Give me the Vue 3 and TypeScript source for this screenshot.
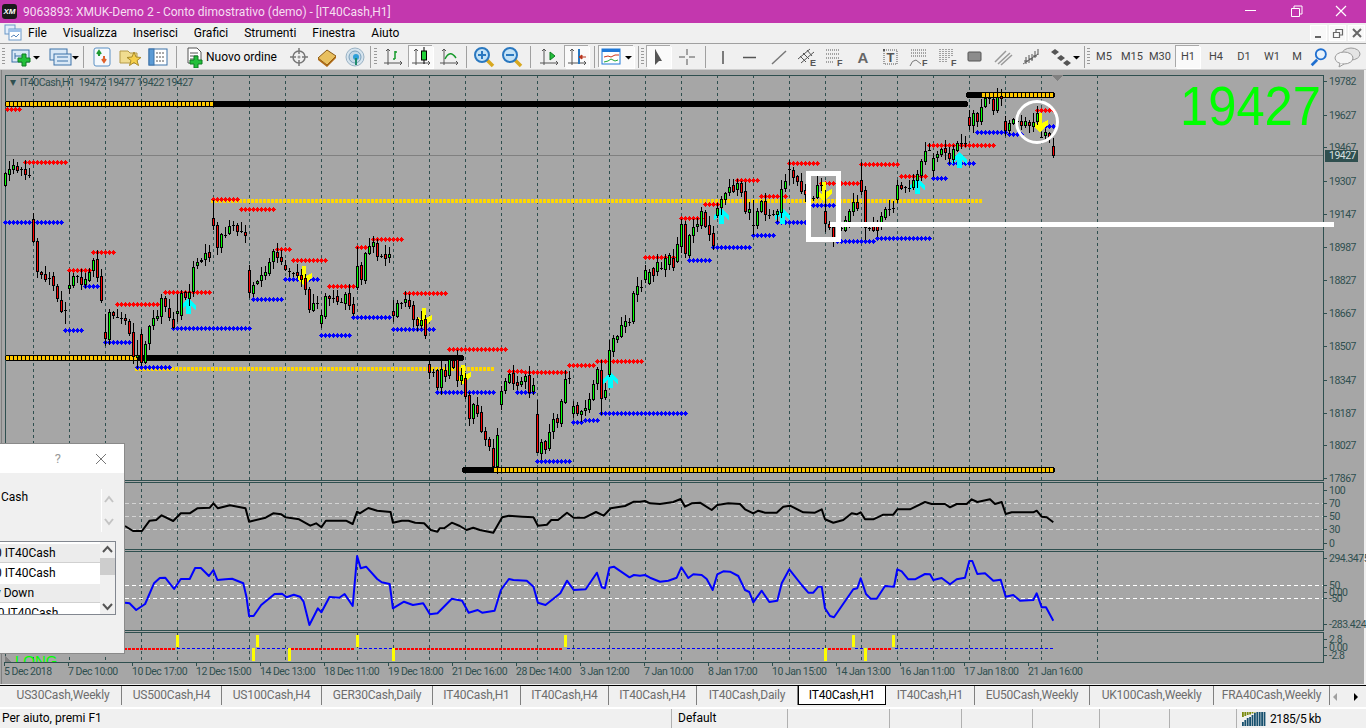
<script setup lang="ts">
type Level = [number, number, number]
type Bar = [number, number, number]

interface Tool {
  w: number
  kind: 'grip' | 'sep' | 'sepgrip' | 'icon' | 'tf' | 'order'
  svg?: string
  svgW?: number
  label?: string
  on?: boolean
}

const axes = '<path d="M7 3v16M3 17h18M5 5l2-2 2 2M19 15l2 2-2 2" stroke="#555" fill="none"/>'
const caret = (x: number) => `<path d="M${x} 10h7l-3.5 3.5z" fill="#000"/>`
const plusGreen = (x: number, y: number) =>
  `<path d="M${x} ${y}h4v4h4v4h-4v4h-4v-4h-4v-4h4z" fill="#22c03a" stroke="#0f7a22"/>`

const tools: Tool[] = [
  { w: 7, kind: 'grip' },
  { w: 40, kind: 'icon', svgW: 36, svg: `<rect x="3" y="4" width="17" height="12" fill="#d9e8f6" stroke="#3d72a8"/><path d="M6 7v6M6 10h10" stroke="#3d72a8"/>${plusGreen(13, 8)}${caret(24)}` },
  { w: 32, kind: 'icon', svgW: 32, svg: `<rect x="3" y="3" width="17" height="11" fill="#d9e8f6" stroke="#3d72a8"/><rect x="7" y="8" width="17" height="11" fill="#d9e8f6" stroke="#3d72a8"/><path d="M10 11h11M10 15h11" stroke="#3d72a8"/>${caret(25)}` },
  { w: 9, kind: 'sep' },
  { w: 28, kind: 'icon', svg: '<rect x="4" y="2" width="16" height="18" rx="2" fill="#f4f8fc" stroke="#5a90c4"/><path d="M9 6v4M7 8l2-3 2 3" stroke="#1f9a32" fill="none" stroke-width="2"/><path d="M14 10v5M12 13l2 3 2-3" stroke="#e0602a" fill="none" stroke-width="2"/>' },
  { w: 28, kind: 'icon', svg: '<path d="M2 5h8l2 2h7v10H2z" fill="#f0dc90" stroke="#b49a48"/><path d="M16 6l2 5 5 .5-4 3 1.500 5-4.500-3-4.500 3 1.500-5-4-3 5-.5z" fill="#f6cf4a" stroke="#a88a2a"/>' },
  { w: 28, kind: 'icon', svg: '<rect x="3" y="3" width="18" height="16" fill="#fff" stroke="#3d72a8"/><rect x="3" y="3" width="5" height="16" fill="#5b9bd5" stroke="#3d72a8"/><path d="M10 7h9M10 11h9M10 15h9" stroke="#555" stroke-dasharray="2 1"/>' },
  { w: 9, kind: 'sep' },
  { w: 104, kind: 'order', label: 'Nuovo ordine', svg: `<path d="M5 2h9l4 4v11H5z" fill="#fff" stroke="#555"/><path d="M7 7h8M7 10h8M7 13h6" stroke="#555"/>${plusGreen(11, 10)}` },
  { w: 28, kind: 'icon', svg: '<circle cx="12" cy="11" r="6" fill="none" stroke="#777" stroke-width="1.500"/><circle cx="12" cy="11" r="1.500" fill="#999"/><path d="M12 2v6M12 14v6M3 11h6M15 11h6" stroke="#777" stroke-width="1.500"/>' },
  { w: 28, kind: 'icon', svg: '<path d="M3 12l9-8 9 6-9 9z" fill="#e8c060" stroke="#8a5a14"/><path d="M3 12l9 7 9-9v2l-9 9-9-7z" fill="#b06a14"/>' },
  { w: 28, kind: 'icon', svg: '<circle cx="12" cy="11" r="9" fill="#d6e4ee" stroke="#9ab2c4"/><circle cx="12" cy="11" r="6" fill="#c4d8e6" stroke="#7aa0bc"/><circle cx="13" cy="11" r="3" fill="#2f9fd8"/><path d="M13 12v7" stroke="#1f8a6a" stroke-width="2"/>' },
  { w: 3, kind: 'sep' },
  { w: 7, kind: 'grip' },
  { w: 28, kind: 'icon', svg: `${axes}<path d="M14 5v8M12 13h2M14 6h2" stroke="#159a2a" stroke-width="1.500" fill="none"/>` },
  { w: 28, on: true, kind: 'icon', svg: `${axes}<path d="M15 1v17" stroke="#000"/><rect x="12.500" y="5" width="5" height="9" fill="#22d23a" stroke="#000"/>` },
  { w: 28, kind: 'icon', svg: `${axes}<path d="M8 13q5-10 11-1" stroke="#159a2a" stroke-width="1.500" fill="none"/>` },
  { w: 7, kind: 'sep' },
  { w: 28, kind: 'icon', svg: '<path d="M15 14l6 6" stroke="#d8a820" stroke-width="3.500"/><circle cx="10" cy="9" r="7" fill="#c4e2f6" stroke="#2a78c0" stroke-width="2"/><path d="M6 9h8M10 5v8" stroke="#2a78c0" stroke-width="2"/>' },
  { w: 28, kind: 'icon', svg: '<path d="M15 14l6 6" stroke="#d8a820" stroke-width="3.500"/><circle cx="10" cy="9" r="7" fill="#c4e2f6" stroke="#2a78c0" stroke-width="2"/><path d="M6 9h8" stroke="#2a78c0" stroke-width="2"/>' },
  { w: 9, kind: 'sep' },
  { w: 28, kind: 'icon', svg: `${axes}<path d="M13 6v8l5-4z" fill="#22c03a" stroke="#0f7a22"/>` },
  { w: 28, on: true, kind: 'icon', svg: `${axes}<path d="M14 3v15" stroke="#2a78c0" stroke-width="2"/><path d="M21 11h-4M17 9l-3 2 3 2z" stroke="#b8341c" fill="#b8341c"/>` },
  { w: 6, kind: 'sep' },
  { w: 39, on: true, kind: 'icon', svgW: 35, svg: `<rect x="3" y="3" width="18" height="15" fill="#fff" stroke="#1f78d8"/><rect x="3" y="3" width="18" height="3" fill="#1f78d8"/><path d="M5 11l4-1 3 1 4-2 4 0" stroke="#c8341c" fill="none"/><path d="M5 16l4-1 3-2 4 2 3-1" stroke="#22a83a" fill="none"/>${caret(26)}` },
  { w: 9, kind: 'sepgrip' },
  { w: 28, on: true, kind: 'icon', svg: '<path d="M8 3v16l4-4 3 0z M8 3l11 11h-5z M9 4v14l4-4h6z" fill="#555"/>' },
  { w: 28, kind: 'icon', svg: '<path d="M12 3v6M12 13v6M4 11h6M14 11h6" stroke="#555"/>' },
  { w: 8, kind: 'sep' },
  { w: 28, kind: 'icon', svg: '<path d="M12 5v13" stroke="#555" stroke-width="1.500"/>' },
  { w: 28, kind: 'icon', svg: '<path d="M4 11.500h13" stroke="#555" stroke-width="1.500"/>' },
  { w: 28, kind: 'icon', svg: '<path d="M5 18L19 5" stroke="#777" stroke-width="1.500"/>' },
  { w: 28, kind: 'icon', svg: '<path d="M3 13L15 3M6 17L19 6M5 10l6 6M8 7l6 6M12 4l5 6" stroke="#555"/><text x="15" y="20" font-size="9" font-weight="700" font-family="Liberation Sans" fill="#555">E</text>' },
  { w: 28, kind: 'icon', svg: '<path d="M3 4h14M3 8h14M3 12h14M3 16h8" stroke="#555" stroke-dasharray="1 1"/><text x="14" y="20" font-size="9" font-weight="700" font-family="Liberation Sans" fill="#555">F</text>' },
  { w: 28, kind: 'icon', svg: '<text x="12" y="17" text-anchor="middle" font-size="15" font-weight="700" font-family="Liberation Sans" fill="#666">A</text>' },
  { w: 28, kind: 'icon', svg: '<rect x="5" y="4" width="13" height="14" fill="none" stroke="#555" stroke-dasharray="1 1"/><rect x="4" y="3" width="2" height="2" fill="#555"/><text x="11.500" y="16" text-anchor="middle" font-size="13" font-weight="700" font-family="Liberation Sans" fill="#555">T</text>' },
  { w: 28, kind: 'icon', svg: '<path d="M4 4h15M4 7h15M4 10h15" stroke="#555" stroke-dasharray="1 1"/><path d="M3 20q2-6 6-6l5 4" stroke="#777" fill="none"/><text x="15" y="20" font-size="9" font-weight="700" font-family="Liberation Sans" fill="#555">F</text>' },
  { w: 28, kind: 'icon', svg: '<path d="M5 3v14M8 3v14M11 3v14M14 3v10M17 3v8" stroke="#555" stroke-dasharray="1 1"/><text x="16" y="20" font-size="9" font-weight="700" font-family="Liberation Sans" fill="#555">F</text>' },
  { w: 28, kind: 'icon', svg: '<rect x="5" y="6" width="13" height="9" rx="1" fill="#8c8c8c" stroke="#555"/>' },
  { w: 28, kind: 'icon', svg: '<path d="M4 16L15 5M7 18L19 7M10 19L21 9" stroke="#999" stroke-width="1.500"/>' },
  { w: 28, kind: 'icon', svg: '<path d="M4 18l15-10" stroke="#666"/><path d="M7 11v7M10 9v8M13 8v7M16 5v7M19 3v6M5 15h4M10 13h4M14 10h4" stroke="#555"/>' },
  { w: 38, kind: 'icon', svgW: 36, svg: `<path d="M9 3l4 3-4 3-4-3zM15 9l4 3-4 3-4-3zM21 14l-4 3 4 3 4-3z" fill="#555"/>${caret(27)}` },
  { w: 7, kind: 'sepgrip' },
  { w: 28, kind: 'tf', label: 'M5' },
  { w: 28, kind: 'tf', label: 'M15' },
  { w: 28, kind: 'tf', label: 'M30' },
  { w: 28, kind: 'tf', label: 'H1', on: true },
  { w: 28, kind: 'tf', label: 'H4' },
  { w: 28, kind: 'tf', label: 'D1' },
  { w: 28, kind: 'tf', label: 'W1' },
  { w: 22, kind: 'tf', label: 'M' },
  { w: 22, kind: 'icon', svg: '<path d="M10 14l-6 6" stroke="#1f6fd0" stroke-width="3"/><circle cx="14" cy="8" r="5.500" fill="#e8f2fb" stroke="#1f6fd0" stroke-width="2"/>' },
  { w: 36, kind: 'icon', svgW: 32, svg: '<ellipse cx="19" cy="8" rx="9" ry="6" fill="#e4e4e4" stroke="#9a9a9a"/><ellipse cx="12" cy="12" rx="9" ry="6" fill="#f4f4f4" stroke="#9a9a9a"/><path d="M8 17l-1 4 5-3" fill="#f4f4f4" stroke="#9a9a9a"/>' },
]

const menus = ['File', 'Visualizza', 'Inserisci', 'Grafici', 'Strumenti', 'Finestra', 'Aiuto']

const tabs = [
  { label: 'US30Cash,Weekly', w: 117 },
  { label: 'US500Cash,H4', w: 100 },
  { label: 'US100Cash,H4', w: 100 },
  { label: 'GER30Cash,Daily', w: 111 },
  { label: 'IT40Cash,H1', w: 88 },
  { label: 'IT40Cash,H4', w: 88 },
  { label: 'IT40Cash,H4', w: 88 },
  { label: 'IT40Cash,Daily', w: 101 },
  { label: 'IT40Cash,H1', w: 88, on: true },
  { label: 'IT40Cash,H1', w: 89 },
  { label: 'EU50Cash,Weekly', w: 115 },
  { label: 'UK100Cash,Weekly', w: 124 },
  { label: 'FRA40Cash,Weekly', w: 116 },
]

const statusCells = [
  { w: 672, text: 'Per aiuto, premi F1' },
  { w: 116, text: 'Default' },
  { w: 102, text: '' },
  { w: 72, text: '' },
  { w: 71, text: '' },
  { w: 67, text: '' },
  { w: 70, text: '' },
  { w: 67, text: '' },
]

const netBars = [4, 6, 8, 9, 11, 13, 14, 16, 15, 16]

// one entry per H1 bar: body top y, body bottom y, 1 = rising
const bars: Bar[] = [
  [173,186,1],[169,175,1],[165,170,1],[166,171,0],[169,169,1],[169,175,0],[175,175,0],[219,242,0],[241,272,0],[272,275,0],
  [274,280,0],[278,278,0],[276,286,0],[286,299,0],[300,312,0],[310,310,0],[285,289,1],[276,286,1],[276,276,0],[277,285,0],
  [279,285,1],[272,281,1],[260,271,1],[259,278,0],[276,301,0],[332,339,0],[312,340,1],[312,316,0],[317,317,0],[318,318,0],
  [318,321,0],[321,334,0],[332,357,0],[355,358,1],[334,363,0],[344,363,1],[326,344,1],[318,326,1],[316,319,1],[298,317,1],
  [298,307,0],[308,318,0],[319,328,0],[311,314,1],[293,316,1],[292,298,0],[292,299,1],[267,292,1],[262,266,1],[260,262,1],
  [253,260,1],[252,258,0],[218,226,0],[225,248,0],[234,248,1],[235,235,0],[226,234,1],[225,225,0],[225,232,0],[231,231,0],
  [232,236,0],[270,293,0],[285,294,1],[281,284,1],[275,281,1],[272,276,1],[262,274,1],[251,262,1],[252,258,0],[257,262,0],
  [265,270,0],[271,271,0],[273,273,0],[272,276,0],[275,280,0],[278,290,0],[289,310,0],[303,311,1],[303,303,0],[315,324,1],
  [296,317,1],[296,299,0],[298,298,0],[296,302,0],[302,302,0],[294,304,1],[293,306,0],[304,314,0],[266,288,1],[265,280,0],
  [253,281,1],[246,254,1],[242,247,1],[243,257,0],[256,256,0],[254,259,0],[254,258,1],[311,316,0],[303,317,1],[303,303,0],
  [299,303,1],[300,307,0],[305,320,0],[319,326,0],[320,326,1],[319,336,0],[364,373,0],[372,373,1],[370,388,0],[369,388,1],
  [370,377,0],[359,376,1],[360,368,0],[359,381,0],[375,381,1],[378,397,0],[395,419,0],[404,419,1],[405,414,0],[412,432,0],
  [431,440,0],[439,447,0],[448,467,0],[435,467,1],[391,405,1],[381,391,1],[374,383,1],[373,384,0],[382,386,0],[381,385,1],
  [376,382,1],[375,393,0],[385,392,1],[414,453,0],[442,454,1],[441,450,0],[432,449,1],[419,432,1],[418,423,0],[401,424,1],
  [379,403,1],[378,378,0],[406,414,1],[405,414,0],[411,415,1],[408,411,1],[399,410,1],[384,400,1],[369,384,1],[370,399,0],
  [390,398,1],[350,375,1],[338,352,1],[336,340,1],[325,337,1],[321,327,1],[322,322,0],[293,322,1],[286,295,1],[287,287,0],
  [270,280,1],[272,284,1],[268,276,0],[262,272,1],[268,268,0],[258,270,1],[255,265,1],[258,268,0],[244,262,1],[224,247,1],
  [224,254,0],[235,256,1],[227,236,1],[224,227,1],[211,226,1],[212,227,0],[225,235,0],[233,246,0],[208,216,1],[199,208,1],
  [193,200,1],[187,193,1],[185,192,0],[183,190,1],[183,193,0],[191,212,0],[209,213,1],[225,225,0],[211,226,1],[201,212,1],
  [201,215,0],[215,215,0],[214,214,0],[211,215,1],[189,213,1],[181,189,1],[169,169,0],[170,178,0],[176,182,0],[181,192,0],
  [190,195,0],[195,195,0],[198,198,0],[185,198,1],[185,185,0],[211,224,0],[224,228,0],[227,240,0],[230,230,0],[228,228,0],
  [220,231,1],[211,222,1],[202,212,1],[202,209,0],[180,192,0],[190,228,0],[228,228,0],[225,231,0],[226,231,0],[216,226,1],
  [209,218,1],[209,209,0],[208,208,0],[185,200,1],[185,189,0],[187,187,0],[188,188,0],[180,188,1],[174,181,1],[161,176,1],
  [151,162,1],[150,150,0],[158,171,1],[154,158,1],[149,155,1],[148,153,0],[153,159,0],[149,160,1],[143,151,1],[143,143,0],
  [143,143,0],[117,126,0],[113,126,1],[113,122,0],[107,122,1],[98,107,1],[98,98,0],[99,111,0],[97,111,1],[96,99,0],
  [121,131,0],[123,131,1],[119,124,1],[121,121,0],[121,126,0],[121,126,1],[122,126,0],[122,127,1],[113,122,1],[137,137,0],
  [132,136,1],[133,139,0],[146,156,0],
]

// long shadows that the generated ones would miss
const longWicks: Record<number, [number, number]> = {
  7: [213, 243], 15: [302, 324], 16: [272, 294], 25: [314, 346], 33: [340, 368], 43: [294, 322], 52: [200, 230],
  88: [247, 290], 97: [300, 322], 105: [315, 339], 133: [400, 453], 151: [340, 377], 149: [360, 415],
  196: [160, 185], 205: [190, 232], 214: [162, 195], 215: [186, 240], 241: [110, 130], 187: [200, 235],
}

const redLevels: Level[] = [
  [7,21,109],[25,65,162],[69,89,270],[93,113,252],[117,157,304],[165,209,292],[213,237,199],[241,273,209],
  [277,289,249],[293,325,260],[329,353,286],[357,365,247],[373,401,239],[405,445,293],[449,505,349],[509,521,371],
  [525,565,372],[569,593,365],[597,641,361],[645,673,257],[681,701,218],[705,717,204],[737,757,180],[761,785,196],
  [789,817,163],[821,857,183],[861,897,164],[901,925,176],[929,993,145],[1037,1053,110],
]

const blueLevels: Level[] = [
  [5,61,222],[65,81,330],[85,97,286],[105,129,342],[173,249,328],[137,169,367],[253,281,299],[285,317,279],
  [321,349,335],[353,389,317],[393,433,329],[437,493,392],[517,533,392],[537,569,461],[573,581,422],[585,597,420],
  [601,685,413],[689,709,260],[713,749,247],[753,773,235],[777,805,222],[813,833,205],[837,873,241],[877,929,238],
  [933,945,178],[949,973,163],[977,1005,132],[1009,1021,134],[1045,1053,126],
]

const bands = [
  { x: 5, w: 963, y: 101, dotsTo: 211, dotsFrom: 7 },
  { x: 966, w: 89, y: 92, dotsTo: 1054, dotsFrom: 983 },
  { x: 5, w: 459, y: 355, dotsTo: 136, dotsFrom: 7 },
  { x: 462, w: 593, y: 467, dotsTo: 1054, dotsFrom: 495 },
]

const gridX = [...Array.from({ length: 29 }, (_, i) => 33 + 36 * i), 1097]

const priceAxis = [
  ['19782', 81], ['19627', 115], ['19467', 147], ['19307', 181], ['19147', 214], ['18987', 247], ['18827', 280],
  ['18667', 313], ['18507', 346], ['18347', 380], ['18187', 413], ['18027', 445], ['17867', 478],
  ['100', 490], ['70', 503], ['50', 516], ['30', 529], ['0', 543],
  ['294.3475', 558], ['50', 585], ['0.00', 592], ['-50', 598], ['-283.424', 624],
  ['2.8', 639], ['0.00', 647], ['-2.8', 655],
] as const

const timeAxis = [
  '5 Dec 2018', '7 Dec 10:00', '10 Dec 17:00', '12 Dec 15:00', '14 Dec 13:00', '18 Dec 11:00', '19 Dec 18:00',
  '21 Dec 16:00', '28 Dec 14:00', '3 Jan 12:00', '7 Jan 10:00', '8 Jan 17:00', '10 Jan 15:00', '14 Jan 13:00',
  '16 Jan 11:00', '17 Jan 18:00', '21 Jan 16:00',
].map((text, i) => ({ text, x: 4 + 64 * i }))

const dotted: Level[] = [[212, 982, 201], [136, 494, 369]]

const cyanArrows = [[188, 298], [721, 208], [782, 208], [917, 178], [959, 152], [610, 372]]
const yellowArrows = [[304, 266], [424, 308], [463, 365], [824, 182], [1040, 113]]

const signalSegs = [
  { from: 124, to: 175, c: 'red' }, { from: 177, to: 253, c: 'blue' }, { from: 257, to: 288, c: 'blue' },
  { from: 291, to: 355, c: 'red' }, { from: 359, to: 392, c: 'blue' }, { from: 395, to: 563, c: 'red' },
  { from: 567, to: 824, c: 'blue' }, { from: 828, to: 851, c: 'red' }, { from: 855, to: 864, c: 'blue' },
  { from: 868, to: 891, c: 'red' }, { from: 895, to: 1054, c: 'blue' },
]
const signalsUp = [177, 257, 357, 565, 853, 893]
const signalsDown = [253, 289, 393, 825, 865]

// the indicator traces were sampled off two differently scaled crops
const toLine = (pts: number[][], scaleX: number, ox: number) =>
  pts.map(([x, y]) => `${(ox + x / scaleX).toFixed(1)},${(480 + y / 3).toFixed(1)}`).join(' ')

const rsiLeft = [[280,138],[298,153],[318,153],[335,122],[350,120],[362,106],[388,123],[405,100],[425,100],[442,85],[470,83],[478,70],[488,85],[515,76],[550,85],[558,125],[595,113],[612,100],[630,103],[640,112],[670,118],[695,137],[708,130],[720,142],[730,122],[775,122],[790,132],[800,95],[806,100],[825,84],[845,92],[875,96],[880,128],[900,122],[915,122],[930,128],[950,130],[965,150],[980,155],[985,145],[995,145],[1012,128],[1030,138],[1045,150],[1060,143],[1075,150],[1105,158],[1125,112],[1140,107],[1170,110],[1195,112],[1205,137],[1225,134],[1235,120],[1250,120],[1270,98],[1285,113],[1310,113],[1335,96],[1352,107],[1368,85],[1400,78],[1420,65]]
const rsiRight = [[0,65],[15,63],[30,70],[60,72],[100,66],[122,57],[135,80],[155,70],[180,68],[215,90],[232,75],[265,70],[300,72],[315,88],[340,100],[355,92],[375,98],[410,98],[430,80],[450,77],[490,97],[525,98],[545,88],[555,118],[580,128],[610,120],[635,100],[650,103],[662,97],[675,118],[700,118],[730,104],[760,104],[772,88],[810,88],[855,66],[875,72],[915,72],[930,82],[950,72],[980,72],[995,58],[1012,66],[1050,58],[1065,72],[1085,66],[1097,102],[1115,97],[1180,97],[1190,92],[1205,110],[1220,112],[1240,127]]
const cciLeft = [[280,368],[290,370],[305,390],[325,372],[345,310],[358,294],[370,293],[390,327],[405,297],[425,297],[437,264],[450,264],[468,288],[478,270],[487,300],[505,298],[520,296],[545,310],[552,350],[558,408],[568,408],[585,375],[615,342],[632,341],[642,352],[658,344],[672,350],[680,365],[693,435],[712,385],[720,397],[738,351],[760,353],[772,342],[790,378],[800,228],[808,265],[820,260],[845,297],[855,307],[873,312],[880,385],[905,365],[925,375],[948,370],[963,403],[980,400],[1012,356],[1035,362],[1050,398],[1070,390],[1080,398],[1108,392],[1122,330],[1140,297],[1150,300],[1180,302],[1195,320],[1205,368],[1222,375],[1255,340],[1270,302],[1285,330],[1312,328],[1337,278],[1348,322],[1355,325],[1365,263],[1375,260],[1410,292],[1420,285]]
const cciRight = [[0,287],[15,285],[30,293],[60,305],[85,302],[110,293],[124,262],[145,294],[160,283],[185,285],[200,297],[218,330],[232,283],[250,274],[270,275],[295,288],[315,330],[328,336],[340,367],[365,332],[388,366],[412,362],[425,310],[448,268],[485,315],[505,338],[520,338],[535,320],[545,320],[555,385],[570,408],[582,412],[640,328],[652,325],[662,295],[678,342],[692,356],[710,356],[735,318],[762,320],[772,268],[785,274],[805,298],[825,298],[855,282],[870,283],[880,300],[905,294],[930,313],[950,298],[975,293],[988,243],[997,243],[1012,282],[1035,280],[1060,302],[1082,299],[1097,350],[1120,345],[1140,362],[1180,360],[1190,340],[1205,382],[1218,382],[1240,422]]

const rsiLine = `${toLine(rsiLeft, 2.24, 0)} ${toLine(rsiRight, 3, 640)}`
const cciLine = `${toLine(cciLeft, 2.24, 0)} ${toLine(cciRight, 3, 640)}`

const crosses = (levels: Level[]) =>
  levels
    .map(([from, to, y]) => {
      let d = ''
      for (let x = from; x <= to; x += 4) {
        d += `M${x - 2} ${y}h5v1h-5zM${x - 1} ${y - 1}h3v3h-3zM${x} ${y - 2}h1v5h-1z`
      }
      return d
    })
    .join('')

const dots = (from: number, to: number, y: number) => {
  let d = ''
  for (let x = from; x <= to; x += 4) d += `M${x - 1} ${y}h3v4h-3z`
  return d
}

const redPath = crosses(redLevels)
const bluePath = crosses(blueLevels)
const yellowPath = dotted.map(([a, b, y]) => dots(a, b, y - 2)).join('')
const bandDots = bands.map(b => dots(b.dotsFrom, b.dotsTo, b.y + 1)).join('')

let wickPath = ''
let greenPath = ''
let darkRedPath = ''
let outlinePath = ''
bars.forEach(([top, bottom, up], k) => {
  const x = 5 + 4 * k
  const [wt, wb] = longWicks[k] ?? [top - 1 - (k * 7) % 9, bottom + 1 + (k * 5) % 7]
  wickPath += `M${x} ${wt}h1V${wb}h-1z`
  const h = Math.max(bottom - top, 1)
  outlinePath += `M${x - 1} ${top}h3v${h}h-3z`
  if (h > 2) {
    const fill = `M${x} ${top + 1}h1v${h - 2}h-1z`
    if (up) greenPath += fill
    else darkRedPath += fill
  }
})

const yellowArrow = ([x, y]: number[]) =>
  `M${x - 2} ${y}h4v10l6-3v5l-8 7-6-5v-5l4 3z`
const cyanArrow = ([x, y]: number[]) =>
  `M${x} ${y}l8 7v5l-5-4v8h-5v-8l-5 4v-5z`
const yellowArrowPath = yellowArrows.map(yellowArrow).join('')
const cyanArrowPath = cyanArrows.map(cyanArrow).join('')
</script>

<template>
  <div class="terminal">
    <header class="title-bar">
      <div class="logo">XM</div>
      <span class="title-text">9063893: XMUK-Demo 2 - Conto dimostrativo (demo) - [IT40Cash,H1]</span>
      <div class="win-buttons">
        <svg width="46" height="23" viewBox="0 0 46 23"><path d="M17 10.500h11" stroke="#fff" /></svg>
        <svg width="46" height="23" viewBox="0 0 46 23"><path d="M17.500 8.500h8v8h-8zM20 8V6h8v8h-2" fill="none" stroke="#fff" /></svg>
        <svg width="46" height="23" viewBox="0 0 46 23"><path d="M16 6l10 10M26 6L16 16" stroke="#fff" stroke-width="1.200" /></svg>
      </div>
    </header>

    <nav class="menu-bar">
      <svg class="mdi-icon" width="18" height="18" viewBox="0 0 18 18">
        <rect x="1" y="1" width="10" height="9" fill="#e3eefa" stroke="#6a97c8" />
        <rect x="5" y="5" width="12" height="11" fill="#fff" stroke="#6a97c8" />
        <rect x="5" y="5" width="12" height="3" fill="#9cc0e8" />
        <path d="M7 13l3-2 2 2 3-3" stroke="#5a86ba" fill="none" />
      </svg>
      <span v-for="m in menus" :key="m" class="menu-item">{{ m }}</span>
      <div class="mdi-buttons">
        <span class="mdi-btn"><svg width="12" height="12" viewBox="0 0 12 12"><path d="M2 9h6v2H2z" fill="#666" /></svg></span>
        <span class="mdi-btn"><svg width="12" height="12" viewBox="0 0 12 12"><path d="M1.500 5.500h6v5h-6zM4 5V2.500h6.500V8H8" fill="none" stroke="#666" stroke-width="1.200" /></svg></span>
        <span class="mdi-btn"><svg width="12" height="12" viewBox="0 0 12 12"><path d="M2 2l8 8M10 2l-8 8" stroke="#666" stroke-width="2" /></svg></span>
      </div>
    </nav>

    <div class="tool-bar">
      <template v-for="(t, i) in tools" :key="i">
        <div v-if="t.kind === 'grip'" class="grip" :style="{ width: t.w + 'px' }"><i /></div>
        <div v-else-if="t.kind === 'sep'" class="sep" :style="{ width: t.w + 'px' }"><i /></div>
        <div v-else-if="t.kind === 'sepgrip'" class="sep-grip" :style="{ width: t.w + 'px' }"><i /><b /></div>
        <div v-else-if="t.kind === 'tf'" class="tf" :class="{ on: t.on }" :style="{ width: t.w + 'px' }">
          <span>{{ t.label }}</span>
        </div>
        <div v-else-if="t.kind === 'order'" class="order" :style="{ width: t.w + 'px' }">
          <svg width="24" height="22" viewBox="0 0 24 22" v-html="t.svg" />
          <span>{{ t.label }}</span>
        </div>
        <div v-else class="tool" :class="{ on: t.on }" :style="{ width: t.w + 'px' }">
          <svg :width="t.svgW ?? 24" height="22" :viewBox="`0 0 ${t.svgW ?? 24} 22`" v-html="t.svg" />
        </div>
      </template>
    </div>

    <main class="chart-wrap">
      <svg class="chart" width="1366" height="614" viewBox="0 70 1366 614">
        <defs>
          <clipPath id="sub-window"><rect x="6" y="633" width="1317" height="29" /></clipPath>
        </defs>

        <path d="M1.500 70V684" stroke="#808080" />
        <rect x="1364" y="70" width="2" height="614" fill="#f0f0f0" />

        <!-- grid and frames -->
        <path
          v-for="x in gridX"
          :key="x"
          :d="`M${x + 0.5} 75V662`"
          class="grid"
        />
        <path d="M5 155.500H1323" stroke="#808080" stroke-width="1.500" />
        <path d="M6 503.500H1323M6 516.500H1323M6 529.500H1323" class="level-soft" />
        <path d="M6 585.500H1323M6 598.500H1323" class="level-white" />

        <rect x="5.500" y="75.500" width="1318" height="405" class="frame" />
        <rect x="5.500" y="482.500" width="1318" height="67" class="frame" />
        <rect x="5.500" y="551.500" width="1318" height="79" class="frame" />
        <rect x="5.500" y="632.500" width="1318" height="30" class="frame" />

        <!-- indicator levels drawn by the EA -->
        <path :d="yellowPath" fill="#ffd700" />
        <rect v-for="(b, i) in bands" :key="i" :x="b.x" :y="b.y" :width="b.w" height="6" rx="3" fill="#000" />
        <path :d="bandDots" fill="#ffc800" />
        <path :d="redPath" fill="#ff0000" />
        <path :d="bluePath" fill="#0000ff" />
        <path :d="cyanArrowPath" fill="#00ffff" />
        <path :d="yellowArrowPath" fill="#ffff00" />

        <!-- candles -->
        <path :d="wickPath" fill="#000" />
        <path :d="outlinePath" fill="#000" />
        <path :d="darkRedPath" fill="#ff0000" />
        <path :d="greenPath" fill="#00ff00" />

        <!-- hand drawn objects -->
        <rect x="808.500" y="173.500" width="30" height="66" class="mark" />
        <rect x="830" y="222" width="504" height="5" fill="#fff" />
        <circle cx="1037" cy="122" r="20.500" class="mark-thin" />

        <path d="M1051 75h13l-6.500 6z" fill="#808080" />

        <text x="10" y="86" class="chart-caret">▾</text>
        <text x="20" y="86" class="axis">IT40Cash,H1&#160;&#160;19472 19477 19422 19427</text>
        <text x="1180" y="125" textLength="141" lengthAdjust="spacingAndGlyphs" class="last-price">19427</text>

        <!-- oscillators -->
        <polyline :points="rsiLine" class="rsi" />
        <polyline :points="cciLine" class="cci" />

        <!-- signal strip -->
        <path
          v-for="s in signalSegs"
          :key="s.from"
          :d="`M${s.from} 648.500H${s.to}`"
          :class="s.c === 'red' ? 'sig-red' : 'sig-blue'"
        />
        <rect v-for="x in signalsUp" :key="'u' + x" :x="x - 1" y="635" width="3" height="12" fill="#ffff00" />
        <rect v-for="x in signalsDown" :key="'d' + x" :x="x - 1" y="648" width="3" height="13" fill="#ffff00" />
        <g clip-path="url(#sub-window)">
          <text x="15" y="666" class="long-tag">LONG</text>
        </g>
        <path d="M5 662v-7l6 7z" fill="#808080" />

        <!-- axes -->
        <g v-for="(p, i) in priceAxis" :key="'p' + i">
          <path :d="`M1323 ${p[1] + 0.5}h4`" stroke="#2f4f4f" />
          <text x="1329" :y="p[1] + 4" class="axis">{{ p[0] }}</text>
        </g>
        <rect x="1325" y="150" width="33" height="12" fill="#2f4f4f" />
        <text x="1329" y="159" class="axis light">19427</text>

        <g v-for="t in timeAxis" :key="t.text">
          <path :d="`M${t.x} 662v4`" stroke="#2f4f4f" />
          <text :x="t.x" y="675" class="axis">{{ t.text }}</text>
        </g>
      </svg>

      <aside class="dialog">
        <div class="dialog-head">
          <span class="help">?</span>
          <svg width="12" height="12" viewBox="0 0 12 12"><path d="M1 1l10 10M11 1L1 11" stroke="#777" /></svg>
        </div>
        <div class="dialog-body">
          <div class="symbol-row">
            <span>Cash</span>
            <div class="spin">
              <svg width="10" height="8" viewBox="0 0 10 8"><path d="M1 7l4-5 4 5" fill="none" stroke="#c4c4c4" stroke-width="2" /></svg>
              <svg width="10" height="8" viewBox="0 0 10 8"><path d="M1 1l4 5 4-5" fill="none" stroke="#c4c4c4" stroke-width="2" /></svg>
            </div>
          </div>
          <div class="list-box">
            <div class="rows">
              <div class="row alt">0 IT40Cash</div>
              <div class="row">0 IT40Cash</div>
              <div class="row alt">y Down</div>
              <div class="row cut">60 IT40Cash</div>
            </div>
            <div class="scroll">
              <svg width="15" height="16" viewBox="0 0 15 16"><path d="M3 10l4.500-5 4.500 5" fill="none" stroke="#555" stroke-width="2" /></svg>
              <i class="thumb" />
              <svg class="down" width="15" height="16" viewBox="0 0 15 16"><path d="M3 6l4.500 5 4.500-5" fill="none" stroke="#555" stroke-width="2" /></svg>
            </div>
          </div>
        </div>
      </aside>
    </main>

    <div class="tab-bar">
      <div
        v-for="(t, i) in tabs"
        :key="i"
        class="tab"
        :class="{ active: t.on }"
        :style="{ width: t.w + 'px' }"
      >{{ t.label }}</div>
      <svg class="tab-arrows" width="34" height="12" viewBox="0 0 34 12">
        <path d="M7 2v8l-4-4z" fill="#a0a0a0" /><path d="M24 2v8l4-4z" fill="#000" />
      </svg>
    </div>

    <footer class="status-bar">
      <div
        v-for="(c, i) in statusCells"
        :key="i"
        class="status-cell"
        :style="{ width: c.w + 'px' }"
      >{{ c.text }}</div>
      <div class="net">
        <svg width="24" height="14" viewBox="0 0 24 14">
          <rect
            v-for="(h, i) in netBars"
            :key="i"
            :x="i * 2.400"
            :y="14 - h"
            width="1.800"
            :height="h"
            fill="#17506e"
          />
          <rect
            v-for="(h, i) in netBars"
            :key="'t' + i"
            :x="i * 2.400"
            y="0"
            width="1.800"
            :height="Math.max(0, 7 - h / 2)"
            fill="#7a8a10"
          />
        </svg>
        <span class="net-text">2185/5 kb</span>
      </div>
    </footer>
  </div>
</template>

<style>
html,
body {
  margin: 0;
  overflow: hidden;
}
</style>

<style scoped>
.terminal {
  position: relative;
  width: 1366px;
  height: 728px;
  display: flex;
  flex-direction: column;
  overflow: hidden;
  background: #f0f0f0;
  font-family: Roboto, 'Liberation Sans', sans-serif;
  font-size: 12px;
  color: #000;
}
.title-bar {
  height: 23px;
  flex: none;
  display: flex;
  align-items: center;
  background: #c337ae;
  color: #f6dff2;
}
.logo {
  width: 15px;
  height: 15px;
  margin-left: 2px;
  border-radius: 3px;
  background: #1a1a1a;
  color: #fff;
  font: italic 700 8px/15px 'Liberation Sans', sans-serif;
  text-align: center;
}
.title-text {
  margin-left: 6px;
  font-size: 12px;
}
.win-buttons {
  margin-left: auto;
  display: flex;
}
.menu-bar {
  height: 20px;
  flex: none;
  display: flex;
  align-items: center;
  padding-left: 4px;
  border-bottom: 1px solid #a0a0a0;
  box-sizing: content-box;
}
.mdi-icon {
  margin-right: 6px;
}
.menu-item {
  margin-right: 16px;
}
.mdi-buttons {
  margin-left: auto;
  display: flex;
  gap: 2px;
  padding-right: 1px;
}
.mdi-btn {
  width: 17px;
  height: 16px;
  background: #f8f8f8;
  border: 1px solid #fff;
  box-sizing: border-box;
  display: flex;
  align-items: center;
  justify-content: center;
}
.tool-bar {
  height: 24px;
  padding-top: 1px;
  flex: none;
  display: flex;
  align-items: stretch;
  border-bottom: 1px solid #cfcfcf;
}
.tool,
.tf,
.order,
.grip,
.sep,
.sep-grip {
  flex: none;
  display: flex;
  align-items: center;
  justify-content: center;
}
.tool svg {
  display: block;
}
.tool.on svg,
.tf.on span {
  background: #fafafa;
  box-shadow: -1px -1px 0 #a8a8a8, 1px 1px 0 #fff;
}
.tf {
  font-size: 11px;
  color: #444;
}
.tf span {
  display: block;
  min-width: 24px;
  height: 22px;
  line-height: 22px;
  text-align: center;
}
.order {
  justify-content: flex-start;
  padding-left: 2px;
  box-sizing: border-box;
  font-size: 12px;
}
.order span {
  margin-left: -1px;
  margin-top: -1px;
}
.grip i,
.sep-grip b {
  display: block;
  width: 3px;
  height: 18px;
  background: repeating-linear-gradient(#9a9a9a 0 1px, transparent 1px 3px);
}
.sep i,
.sep-grip i {
  display: block;
  width: 1px;
  height: 22px;
  background: #a0a0a0;
}
.sep-grip {
  gap: 2px;
}
.chart-wrap {
  position: relative;
  height: 614px;
  flex: none;
  background: #a6a6a6;
}
.chart {
  display: block;
  background: #a6a6a6;
  shape-rendering: crispEdges;
}
.grid {
  stroke: #2f4f4f;
  stroke-dasharray: 3 3;
  fill: none;
}
.level-soft {
  stroke: #d3d3d3;
  stroke-dasharray: 4 3;
  fill: none;
}
.level-white {
  stroke: #fff;
  stroke-dasharray: 4 3;
  fill: none;
}
.frame {
  fill: none;
  stroke: #2f4f4f;
}
.mark {
  fill: none;
  stroke: #fff;
  stroke-width: 5;
}
.mark-thin {
  fill: none;
  stroke: #fff;
  stroke-width: 3;
  shape-rendering: geometricPrecision;
}
.rsi,
.cci {
  fill: none;
  stroke-width: 2;
  stroke-linejoin: round;
  shape-rendering: geometricPrecision;
}
.rsi {
  stroke: #000;
}
.cci {
  stroke: #0000ff;
}
.sig-red {
  stroke: #ff0000;
  stroke-width: 2;
  stroke-dasharray: 3 1;
}
.sig-blue {
  stroke: #0000ff;
  stroke-dasharray: 3 2;
}
.axis {
  font-family: Roboto, 'Liberation Sans', sans-serif;
  font-size: 10.500px;
  letter-spacing: -0.5px;
  fill: #2f4f4f;
}
.axis.light {
  fill: #d8e0e0;
}
.chart-caret {
  font-size: 12px;
  fill: #2f4f4f;
  font-family: 'DejaVu Sans', sans-serif;
}
.last-price {
  font-family: 'Liberation Sans', sans-serif;
  font-size: 56px;
  fill: #00ff00;
  shape-rendering: geometricPrecision;
}
.long-tag {
  font-family: 'Liberation Sans', sans-serif;
  font-size: 15px;
  fill: #00ff00;
}
.dialog {
  position: absolute;
  left: 0;
  top: 373px;
  width: 125px;
  height: 211px;
  box-sizing: border-box;
  border: 1px solid #8a8a8a;
  border-left: 0;
  background: #f0f0f0;
  display: flex;
  flex-direction: column;
  overflow: hidden;
}
.dialog-head {
  height: 29px;
  flex: none;
  background: #fff;
  display: flex;
  align-items: center;
  justify-content: flex-end;
  gap: 34px;
  padding-right: 17px;
}
.help {
  font-size: 13px;
  color: #999;
}
.dialog-body {
  flex: 1;
  min-height: 0;
}
.symbol-row {
  display: flex;
  justify-content: space-between;
  height: 68px;
  box-sizing: border-box;
  padding: 17px 9px 0 1px;
}
.spin {
  width: 14px;
  height: 43px;
  margin-top: -1px;
  border-left: 1px solid #fff;
  display: flex;
  flex-direction: column;
  justify-content: space-between;
  align-items: center;
  padding: 6px 0;
  box-sizing: border-box;
}
.list-box {
  width: 116px;
  height: 74px;
  box-sizing: border-box;
  border: 1px solid #828790;
  border-left: 0;
  background: #fff;
  display: flex;
  overflow: hidden;
}
.rows {
  flex: 1;
  min-width: 0;
  overflow: hidden;
  padding-top: 2px;
}
.row {
  height: 19px;
  margin-bottom: 1px;
  margin-left: -9px;
  padding-left: 4px;
  line-height: 18px;
  white-space: nowrap;
  background: #fff;
}
.row.alt {
  background: #ececec;
  border-bottom: 1px solid #d0d0d0;
  box-sizing: border-box;
}
.row.cut {
  margin-left: -13px;
}
.scroll {
  width: 15px;
  flex: none;
  background: #f0f0f0;
  display: flex;
  flex-direction: column;
}
.scroll svg {
  flex: none;
}
.scroll .down {
  margin-top: auto;
}
.thumb {
  display: block;
  height: 17px;
  background: #cdcdcd;
}
.tab-bar {
  height: 21px;
  flex: none;
  display: flex;
  align-items: stretch;
  padding-left: 5px;
  margin-top: 1px;
  border-top: 1px solid #000;
  background: #f0f0f0;
  color: #6d6d6d;
  letter-spacing: -0.2px;
  position: relative;
}
.tab {
  flex: none;
  box-sizing: border-box;
  text-align: center;
  line-height: 18px;
  height: 19px;
  border-right: 1px solid #808080;
  white-space: nowrap;
}
.tab.active {
  background: #fff;
  color: #000;
  margin-top: -1px;
  height: 20px;
  border: 1px solid #000;
}
.tab-arrows {
  align-self: center;
  margin-left: 0;
}
.status-bar {
  height: 20px;
  flex: 1;
  display: flex;
  align-items: stretch;
  border-top: 2px solid #fff;
  background: #f0f0f0;
}
.status-cell {
  flex: none;
  box-sizing: border-box;
  padding-left: 2px;
  line-height: 19px;
  border-right: 1px solid #b0b0b0;
  white-space: nowrap;
}
.status-cell:nth-child(2) {
  padding-left: 6px;
}
.net {
  display: flex;
  align-items: center;
  gap: 4px;
  padding-left: 5px;
  white-space: nowrap;
}
.net-text {
  letter-spacing: -0.4px;
}
</style>
